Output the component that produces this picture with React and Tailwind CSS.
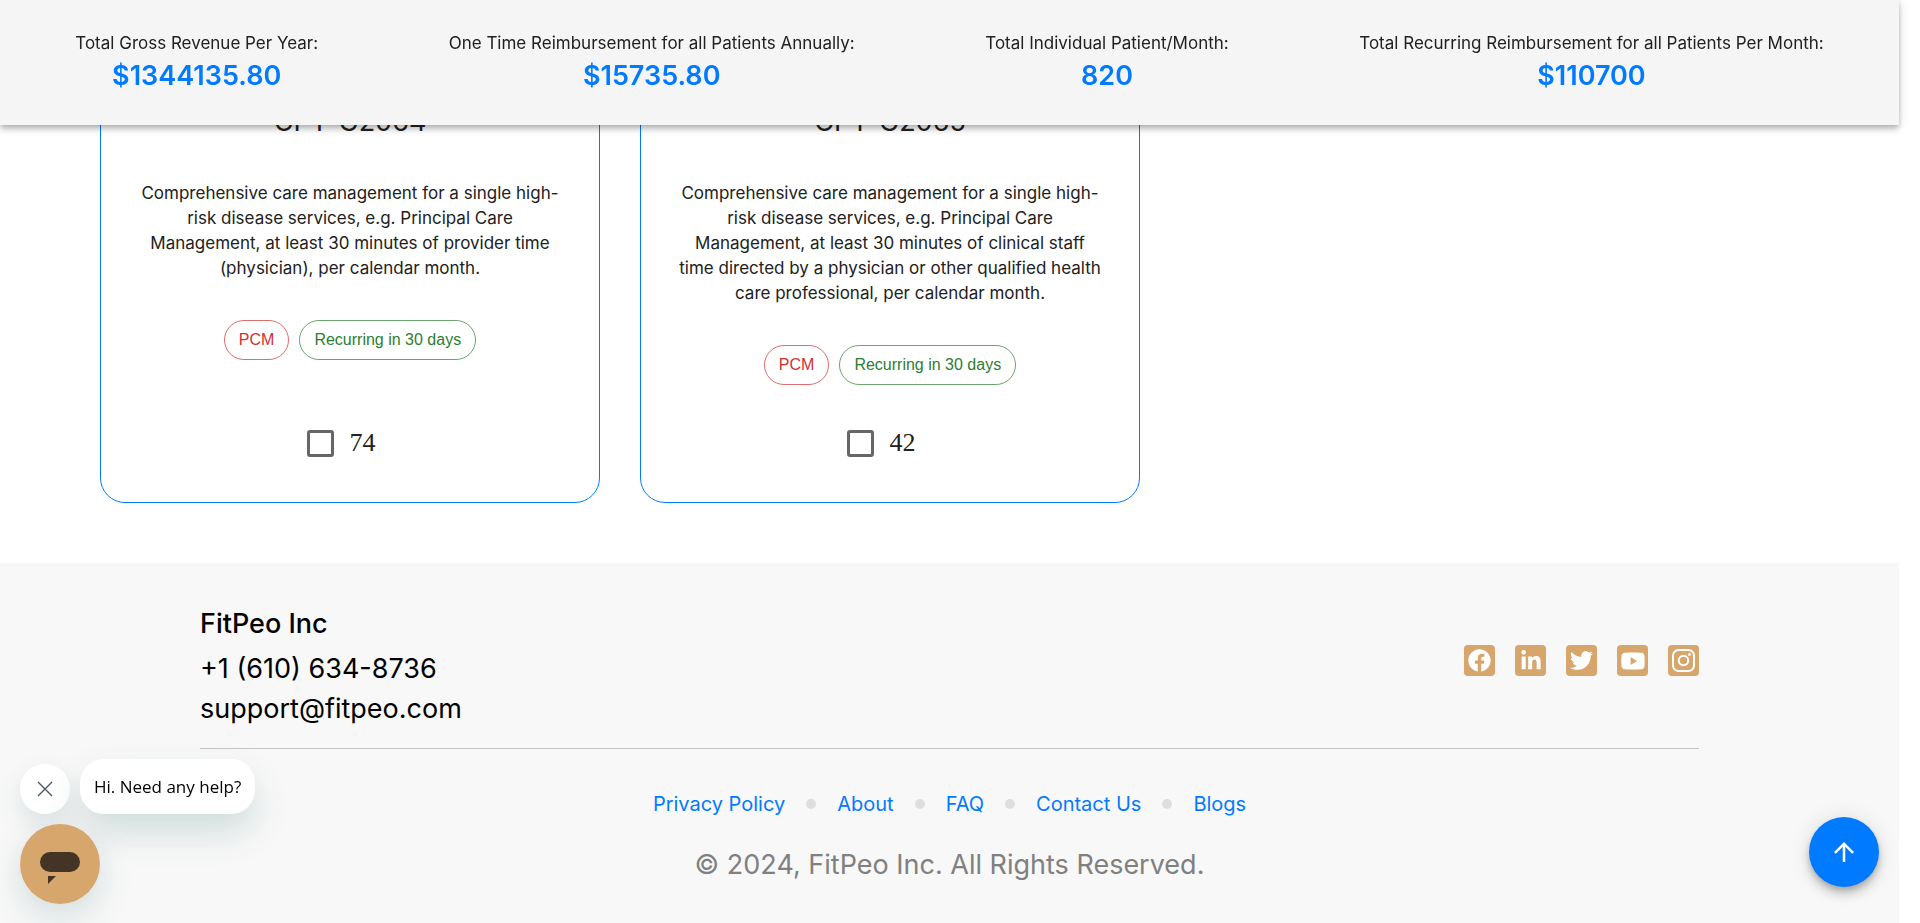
import { FaFacebook, FaLinkedinIn, FaTwitter } from "react-icons/fa";

const totals = [
  { label: "Total Gross Revenue Per Year:", value: "$1344135.80" },
  { label: "One Time Reimbursement for all Patients Annually:", value: "$15735.80" },
  { label: "Total Individual Patient/Month:", value: "820" },
  { label: "Total Recurring Reimbursement for all Patients Per Month:", value: "$110700" },
];

const plans = [
  {
    code: "CPT-G2064",
    text: "Comprehensive care management for a single high-risk disease services, e.g. Principal Care Management, at least 30 minutes of provider time (physician), per calendar month.",
    amount: 74,
  },
  {
    code: "CPT-G2065",
    text: "Comprehensive care management for a single high-risk disease services, e.g. Principal Care Management, at least 30 minutes of clinical staff time directed by a physician or other qualified health care professional, per calendar month.",
    amount: 42,
  },
];

function YoutubeIcon({ className }) {
  return (
    <svg viewBox="0 0 24 24" className={className} fill="currentColor">
      <path
        fillRule="evenodd"
        d="M12 3.500c3.200 0 6.300.1 8.300.3 1.900.2 3 1.300 3.200 3.200.3 3.300.3 6.700 0 10-.2 1.900-1.300 3-3.200 3.200-5.500.4-11.100.4-16.600 0-1.900-.2-3-1.300-3.200-3.200-.3-3.300-.3-6.700 0-10 .2-1.900 1.300-3 3.200-3.200 2-.2 5.100-.3 8.300-.3zM9.600 8v8l6.400-4z"
      />
    </svg>
  );
}

function InstagramIcon({ className }) {
  return (
    <svg viewBox="0 0 24 24" className={className} fill="none" stroke="currentColor" strokeWidth="2.100">
      <rect x="1.050" y="1.050" width="21.900" height="21.900" rx="5.800" />
      <circle cx="12" cy="12" r="5" />
      <circle cx="18.300" cy="5.700" r="1.500" fill="currentColor" stroke="none" />
    </svg>
  );
}

const socials = [
  { name: "Facebook", icon: <FaFacebook className="size-[23px]" /> },
  { name: "LinkedIn", icon: <FaLinkedinIn className="size-[22px]" /> },
  { name: "Twitter", icon: <FaTwitter className="size-[23px]" /> },
  { name: "YouTube", icon: <YoutubeIcon className="size-[24px]" /> },
  { name: "Instagram", icon: <InstagramIcon className="size-[23px]" /> },
];

const links = ["Privacy Policy", "About", "FAQ", "Contact Us", "Blogs"];

function TotalsBar() {
  return (
    <header className="fixed top-0 right-[21px] left-0 z-10 flex justify-around bg-[#f5f5f5] px-[10px] pt-[31px] pb-[33px] text-center shadow-[0_2px_5px_-1px_rgba(0,0,0,0.2),0_5px_6px_0_rgba(0,0,0,0.14),0_1px_12px_0_rgba(0,0,0,0.12)]">
      {totals.map((t) => (
        <div key={t.label}>
          <p className="text-[17px] leading-[25px] text-[#212121]">{t.label}</p>
          <p className="pt-[3px] text-[27px] leading-[33px] font-semibold text-[#007bff]">{t.value}</p>
        </div>
      ))}
    </header>
  );
}

function PlanCard({ plan }) {
  return (
    <article className="flex w-[500px] flex-col items-center rounded-[25px] border border-[#007bff] px-9 pt-[42px] pb-8 text-center">
      <h2 className="text-[27px] leading-[38px] text-[#212121]">{plan.code}</h2>
      <p className="pt-10 text-[17px] leading-[25px] text-[#212121]">{plan.text}</p>
      <div className="mb-[31px] flex gap-[10px] pt-[39px] font-['Liberation_Sans',sans-serif] text-base">
        <span className="flex h-10 items-center rounded-[20px] border border-[#d32f2f]/70 px-[14px] text-[#d32f2f]">PCM</span>
        <span className="flex h-10 items-center rounded-[20px] border border-[#2e7d32]/70 px-[14px] text-[#2e7d32]">Recurring in 30 days</span>
      </div>
      <label className="mt-auto flex items-center gap-4 pr-[18px] font-['Liberation_Serif',serif] text-[26px] leading-[54px] text-[#212121]">
        <input type="checkbox" className="size-[27px] appearance-none rounded-[3px] border-3 border-[#666666] checked:bg-[#007bff]" />
        {plan.amount}
      </label>
    </article>
  );
}

function Footer() {
  return (
    <footer className="flex-1 bg-[#f8f8f8] px-[200px] pt-[41px]">
      <div className="flex items-center justify-between border-b border-[#c4c4c4] pb-[19px]">
        <address className="flex flex-col text-[27px] leading-10 text-black not-italic">
          <span className="pb-[5px] font-medium">FitPeo Inc</span>
          <a href="tel:+16106348736">+1 (610) 634-8736</a>
          <a href="mailto:support@fitpeo.com">support@fitpeo.com</a>
        </address>
        <div className="flex gap-5 self-start pt-[41px]">
          {socials.map(({ name, icon }) => (
            <a key={name} href="#" aria-label={name} className="flex size-[31px] items-center justify-center rounded-[4px] bg-[#d7a66c] text-white">
              {icon}
            </a>
          ))}
        </div>
      </div>
      <nav className="flex items-center justify-center pt-10 text-xl leading-[30px] text-[#007bff]">
        {links.map((l, i) => (
          <div key={l} className="flex items-center">
            {i > 0 && <span className="mx-[21px] size-[10px] rounded-full bg-[#dedede]" />}
            <a href="#">{l}</a>
          </div>
        ))}
      </nav>
      <p className="pt-[26px] text-center text-[27px] leading-10 text-[#808080]">© 2024, FitPeo Inc. All Rights Reserved.</p>
    </footer>
  );
}

function ChatWidget() {
  return (
    <aside className="fixed bottom-[19px] left-5 z-20 flex flex-col gap-[10px]">
      <div className="flex items-end gap-[10px]">
        <button aria-label="Close" className="flex size-[50px] items-center justify-center rounded-full bg-white/90 shadow-[0_12px_28px_rgba(0,77,77,0.12)]">
          <svg viewBox="0 0 16 16" className="size-4 stroke-[#4b5563]" fill="none" strokeWidth="1.4">
            <path d="M1 1l14 14M15 1L1 15" />
          </svg>
        </button>
        <button className="h-[55px] rounded-[24px] bg-white px-[14px] font-['Open_Sans',sans-serif] text-[17px] text-black shadow-[0_18px_36px_rgba(0,77,77,0.16)]">
          Hi. Need any help?
        </button>
      </div>
      <button aria-label="Open chat" className="size-20 rounded-full bg-[#d7a66c] shadow-[0_12px_36px_rgba(0,77,77,0.16)]">
        <svg viewBox="0 0 80 80" className="size-20" fill="#433425">
          <rect x="20" y="28" width="40" height="20" rx="10" />
          <path d="M28 52h8l-8 8z" />
        </svg>
      </button>
    </aside>
  );
}

export default function App() {
  return (
    <div className="flex min-h-screen flex-col bg-white pr-[21px] font-['Inter',sans-serif]">
      <TotalsBar />
      <main className="flex gap-10 px-[100px] pt-[60px] pb-[60px]">
        {plans.map((p) => (
          <PlanCard key={p.code} plan={p} />
        ))}
      </main>
      <Footer />
      <ChatWidget />
      <button aria-label="Back to top" className="fixed right-[41px] bottom-[36px] z-20 flex size-[70px] items-center justify-center rounded-full bg-[#007bff] shadow-[0_4px_6px_-1px_rgba(0,0,0,0.2),0_8px_12px_0_rgba(0,0,0,0.14),0_1px_22px_0_rgba(0,0,0,0.12)]">
        <svg viewBox="0 0 24 24" className="size-[30px]" fill="#fff">
          <path d="m4 12 1.410 1.410L11 7.830V20h2V7.830l5.580 5.590L20 12l-8-8z" />
        </svg>
      </button>
    </div>
  );
}
